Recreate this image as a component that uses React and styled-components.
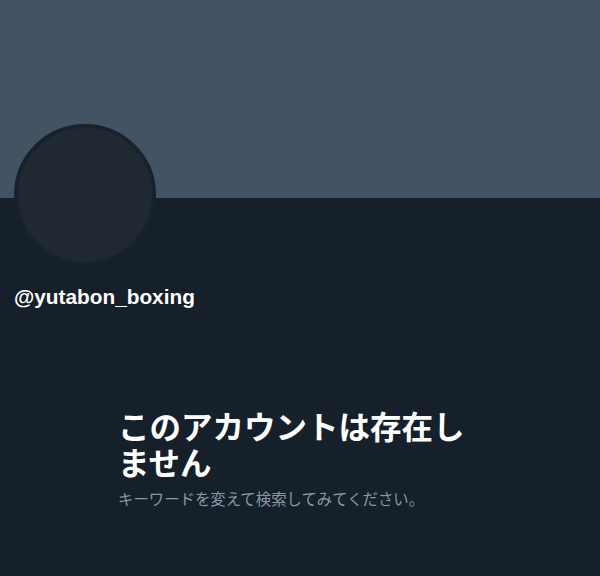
import React from "react";
import styled, { createGlobalStyle } from "styled-components";

const Global = createGlobalStyle`
  html, body { margin: 0; padding: 0; background: #15202b; }
  body { font-family: "Liberation Sans", "Noto Sans CJK JP", sans-serif; }
`;

const Page = styled.div`
  width: 600px;
  height: 576px;
  background: #15202b;
  display: flex;
  flex-direction: column;
  overflow: hidden;
`;

const Banner = styled.div`
  height: 198px;
  background: #425364;
`;

const Header = styled.div`
  padding: 0 14px;
  display: flex;
  flex-direction: column;
`;

const Avatar = styled.div`
  width: 134px;
  height: 134px;
  margin-top: -74px;
  border-radius: 50%;
  border: 4px solid #18222d;
  background: #202832;
`;

const Handle = styled.div`
  margin-top: 19px;
  color: #ffffff;
  font-weight: 700;
  font-size: 20.8px;
  line-height: 24px;
`;

const Empty = styled.div`
  width: 364px;
  margin: 98px auto 0;
  display: flex;
  flex-direction: column;
`;

const Title = styled.div`
  color: #ffffff;
  font-family: "Noto Sans CJK JP", sans-serif;
  font-weight: 700;
  font-size: 31.5px;
  line-height: 36px;
`;

const Sub = styled.div`
  margin-top: 9px;
  color: #8899a6;
  font-family: "Noto Sans CJK JP", sans-serif;
  font-size: 15.4px;
  line-height: 20px;
`;

export default function App() {
  return (
    <Page>
      <Global />
      <Banner />
      <Header>
        <Avatar />
        <Handle>@yutabon_boxing</Handle>
      </Header>
      <Empty>
        <Title>このアカウントは存在しません</Title>
        <Sub>キーワードを変えて検索してみてください。</Sub>
      </Empty>
    </Page>
  );
}
